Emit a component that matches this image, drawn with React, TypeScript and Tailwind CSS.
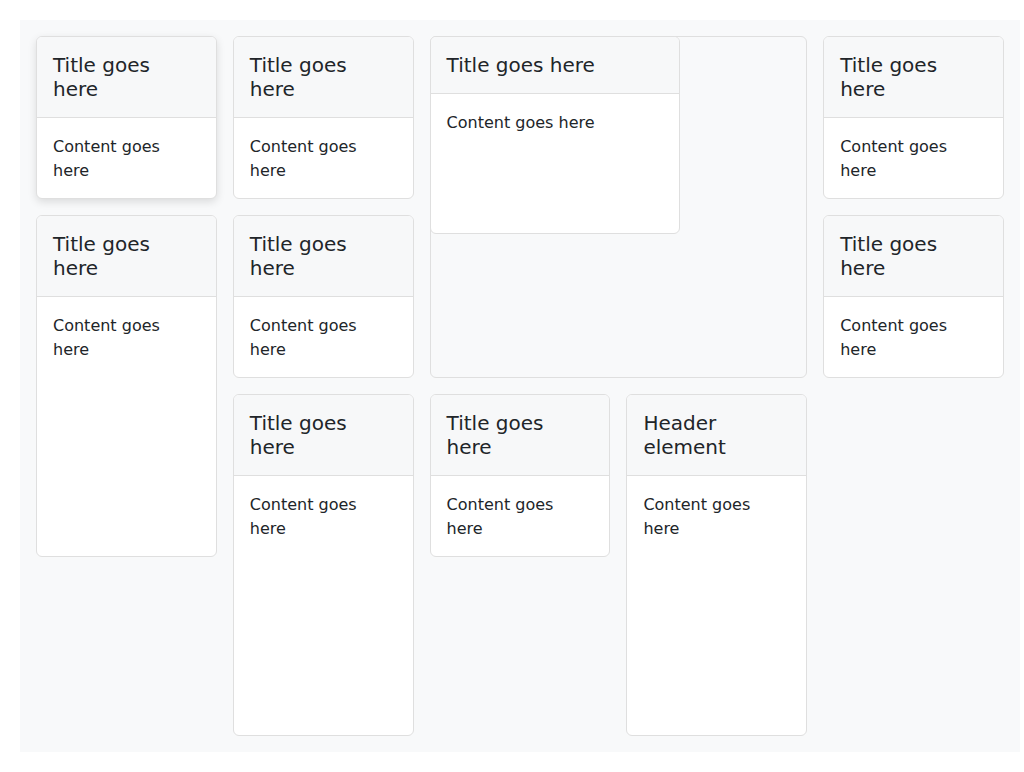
import React from "react";

type CardProps = {
  title: string;
  content?: string;
  className?: string;
};

const Card = ({ title, content = "Content goes here", className = "" }: CardProps) => (
  <div
    className={
      "flex flex-col overflow-hidden rounded-md border border-[#dfdfdf] bg-white " +
      className
    }
  >
    <div className="border-b border-[#dfdfdf] bg-[#f7f8f9] px-4 py-4 text-[20px] leading-[24px]">
      {title}
    </div>
    <div className="flex-1 px-4 pt-[17px] pb-[15px] text-[16px] leading-[24px]">{content}</div>
  </div>
);

export default function App() {
  return (
    <div
      className="m-5 w-[1000px] bg-[#f8f9fa] p-4 text-[#212529]"
      style={{ fontFamily: '"DejaVu Sans", sans-serif' }}
    >
      <div className="grid grid-cols-5 auto-rows-[163px] gap-4">
        <Card
          title="Title goes here"
          className="col-start-1 row-start-1 shadow-[0_3px_8px_rgba(0,0,0,0.12)]"
        />
        <Card title="Title goes here" className="col-start-1 row-start-2 row-span-2" />

        <Card title="Title goes here" className="col-start-2 row-start-1" />
        <Card title="Title goes here" className="col-start-2 row-start-2" />
        <Card title="Title goes here" className="col-start-2 row-start-3 row-span-2" />

        <div className="col-start-3 col-span-2 row-start-1 row-span-2 rounded-md border border-[#dfdfdf]">
          <Card title="Title goes here" className="-m-px h-[198px] w-[250px]" />
        </div>

        <Card title="Title goes here" className="col-start-3 row-start-3" />
        <Card title="Header element" className="col-start-4 row-start-3 row-span-2" />

        <Card title="Title goes here" className="col-start-5 row-start-1" />
        <Card title="Title goes here" className="col-start-5 row-start-2" />
      </div>
    </div>
  );
}
